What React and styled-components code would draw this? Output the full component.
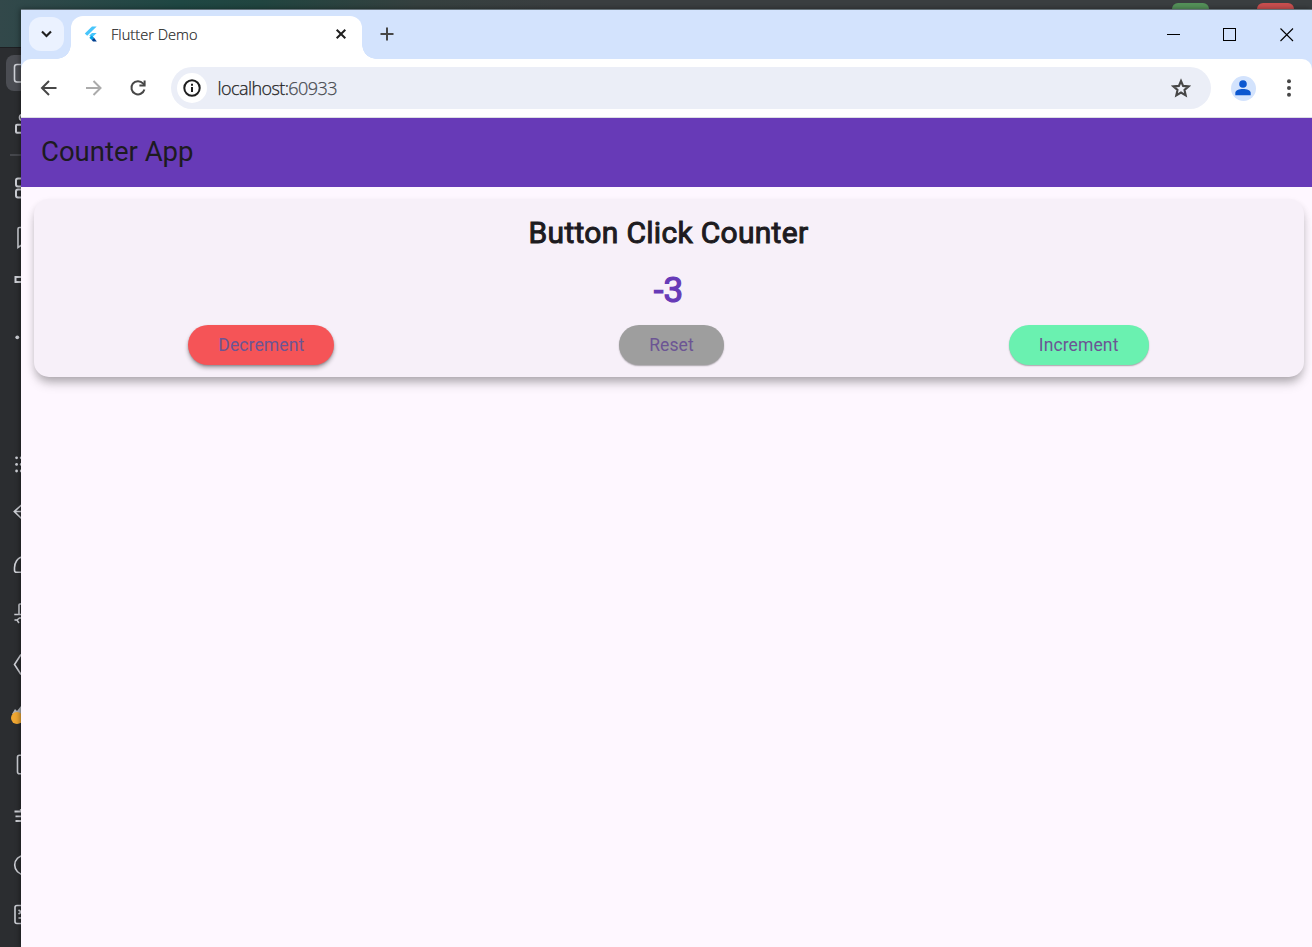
import React from "react";
import styled, { createGlobalStyle } from "styled-components";

const GlobalStyle = createGlobalStyle`
  * { box-sizing: border-box; }
  html, body { margin: 0; padding: 0; overflow: hidden; background: #2b2d30; }
  svg { display: block; flex: none; }
  button { border: 0; padding: 0; background: none; font: inherit; }
`;

const Desktop = styled.div`
  position: relative;
  width: 1312px;
  height: 947px;
  overflow: hidden;
  background: #2b2d30;
`;

const IdeTitleBar = styled.div`
  display: flex;
  justify-content: flex-end;
  gap: 48px;
  height: 48px;
  padding: 3px 18px 0 0;
  background: linear-gradient(90deg, #32484a 0, #1f4743 180px, #214540 260px, #35403f 420px, #3a3e40 560px, #3a3e40 100%);
  border-bottom: 1px solid #1e1f22;
`;

const RunChip = styled.span`
  width: 37px;
  height: 30px;
  border-radius: 6px;
  background: ${(p) => p.$color};
`;

const IdeSidebar = styled.div`
  display: flex;
  flex-direction: column;
  width: 40px;
  padding-top: 7px;
`;

const ToolSlot = styled.div`
  height: 36px;
  margin-top: ${(p) => p.$gap || 0}px;
  border-radius: 8px;
  ${(p) => p.$active && "margin-left: 6px; background: #4b4d53; & > svg { margin-left: -6px; }"}
`;

const SidebarRule = styled.div`
  height: 2px;
  margin: 12px 0 0 10px;
  background: #45474c;
`;

const BrowserWindow = styled.div`
  position: absolute;
  left: 21px;
  top: 9px;
  width: 1291px;
  height: 938px;
  display: flex;
  flex-direction: column;
  border-top: 1px solid #68757d;
  background: #d3e3fd;
  box-shadow: -1px 0 5px rgba(0, 0, 0, 0.4);
`;

const TabStrip = styled.div`
  display: flex;
  align-items: flex-start;
  height: 49px;
  padding: 6px 0 0 8px;
`;

const TabSearch = styled.button`
  display: flex;
  align-items: center;
  justify-content: center;
  width: 35px;
  height: 34px;
  margin: 1px 7px 0 0;
  border-radius: 12px;
  background: #ebf2ff;
`;

const Tab = styled.div`
  position: relative;
  display: flex;
  align-items: center;
  width: 290.5px;
  height: 43px;
  padding: 0 12.5px 7px 12px;
  border-radius: 12px 12px 0 0;
  background: #fff;
  &::before, &::after {
    content: "";
    position: absolute;
    bottom: 0;
    width: 14px;
    height: 14px;
  }
  &::before { left: -14px; background: radial-gradient(circle at 0 0, transparent 13.5px, #fff 14px); }
  &::after { right: -14px; background: radial-gradient(circle at 100% 0, transparent 13.5px, #fff 14px); }
`;

const TabTitle = styled.span`
  flex: 1;
  margin-left: 12px;
  font: 300 14.6px/20px "Open Sans", "Noto Sans", sans-serif;
  letter-spacing: 0.03px;
  color: #1f1f1f;
  -webkit-text-stroke: 0.2px #1f1f1f;
  white-space: nowrap;
`;

const NewTab = styled.button`
  display: flex;
  margin: 10px 0 0 17px;
`;

const WindowControls = styled.div`
  display: flex;
  gap: 41px;
  margin: 11px 19px 0 auto;
  & > :last-child { margin-left: 1px; margin-right: -1px; }
`;

const Toolbar = styled.div`
  display: flex;
  align-items: center;
  height: 59px;
  padding: 0 20.5px 0 18px;
  border-radius: 10px 10px 0 0;
  border-bottom: 1px solid #dcdde3;
  background: #fff;
`;

const NavButtons = styled.div`
  display: flex;
  gap: 24.5px;
  width: 132px;
`;

const AddressBar = styled.div`
  display: flex;
  align-items: center;
  width: 1040px;
  height: 42px;
  padding: 0 20px 0 6px;
  border-radius: 21px;
  background: #ebeef7;
`;

const SiteInfo = styled.span`
  display: flex;
  align-items: center;
  justify-content: center;
  width: 30px;
  height: 30px;
  border-radius: 50%;
  background: #fff;
`;

const Url = styled.span`
  flex: 1;
  margin-left: 10.5px;
  font: 300 18px/24px "Open Sans", "Noto Sans", sans-serif;
  letter-spacing: -0.58px;
  color: #1f1f1f;
  -webkit-text-stroke: 0.25px currentColor;
`;

const Port = styled.span`
  color: #474a50;
`;

const Profile = styled.span`
  display: flex;
  align-items: center;
  justify-content: center;
  width: 25px;
  height: 25px;
  margin: 0 29.5px 0 20px;
  padding: 0 1px 1px 0;
  border-radius: 50%;
  background: #d3e3fd;
`;

const AppBar = styled.header`
  display: flex;
  align-items: center;
  height: 69px;
  padding: 0 20px 2px;
  background: #673ab7;
  font: 400 27.5px/36px Roboto, sans-serif;
  color: #1d1b20;
`;

const Page = styled.main`
  flex: 1;
  padding: 11.5px 8.5px 0 12.5px;
  background: #fef7ff;
`;

const Card = styled.section`
  display: flex;
  flex-direction: column;
  align-items: center;
  height: 178.5px;
  padding: 15.5px 12.5px 0;
  border-radius: 15px;
  background: #f7f0f9;
  box-shadow: 0 8px 12px -3px rgba(0, 0, 0, 0.25), 0 4px 9px -1px rgba(0, 0, 0, 0.14);
`;

const Heading = styled.h1`
  margin: 0;
  font: 400 30px/38px Roboto, sans-serif;
  letter-spacing: 0.3px;
  -webkit-text-stroke: 1px currentColor;
  color: #1d1b20;
`;

const Count = styled.div`
  margin-top: 17px;
  font: 400 35px/44px Roboto, sans-serif;
  -webkit-text-stroke: 1.2px currentColor;
  color: #673ab7;
`;

const Actions = styled.div`
  display: flex;
  justify-content: space-around;
  width: 100%;
  margin-top: 11.5px;
`;

const ActionButton = styled.button`
  width: ${(p) => p.$width}px;
  height: 40px;
  padding-top: 2px;
  border-radius: 20px;
  background: ${(p) => p.$color};
  box-shadow: ${(p) => (p.$raised ? "0 3px 4px rgba(0,0,0,.3), 0 1px 2px rgba(0,0,0,.2)" : "0 1px 1.5px rgba(0,0,0,.32)")};
  font: 400 17.5px/25px Roboto, sans-serif;
  letter-spacing: 0.12px;
  color: #6c5594;
`;

const ToolIcon = ({ children }) => (
  <svg width="40" height="36" fill="none" stroke="#ced0d6" strokeWidth="1.6">{children}</svg>
);

const ChevronDown = () => (
  <svg width="12" height="8" fill="none" stroke="#1f1f1f" strokeWidth="2.1"><path d="M1 1.4 5.500 6 10 1.400" /></svg>
);

const FlutterLogo = () => (
  <svg width="16" height="16" viewBox="0 0 16 16">
    <path d="M9 .5h4.700L4.200 9.800 1.800 7.500z" fill="#47c5fb" />
    <path d="M9 7h4.700l-5 4.700L6.300 9.400z" fill="#47c5fb" />
    <path d="m6.300 11.700 2.400-2.300 2.400 2.300-2.400 2.400z" fill="#00a2e8" />
    <path d="m8.700 14.100 2.400-2.400 2.700 3.700H10z" fill="#003f8f" />
  </svg>
);

const ArrowIcon = ({ color, flip }) => (
  <svg width="20" height="20" fill="none" stroke={color} strokeWidth="2">
    <path d={flip ? "M2 10h14M9.500 3l7 7-7 7" : "M17.500 10h-14M10 3l-7 7 7 7"} />
  </svg>
);

const ReloadIcon = () => (
  <svg width="20" height="20" viewBox="0 0 20 20" fill="none" stroke="#474747" strokeWidth="2">
    <path d="M16.400 11.500A6.600 6.600 0 1 1 15 5.400l1.500 1.800" />
    <path d="M16.600 2.500V7.600h-5.200" />
  </svg>
);

const InfoIcon = () => (
  <svg width="18" height="18" fill="none" stroke="#1f1f1f" strokeWidth="2">
    <circle cx="9" cy="9" r="7.700" /><path d="M9 8v5M9 4.800v2" />
  </svg>
);

const StarIcon = () => (
  <svg width="20" height="20" viewBox="0 0 20 20" fill="none" stroke="#474747" strokeWidth="2.100">
    <path d="m10 3 2.100 4.900 5.500.5-4.100 3.600 1.200 5.400-4.700-2.900-4.700 2.900 1.200-5.400-4.100-3.600 5.500-.5z" />
  </svg>
);

const PersonIcon = () => (
  <svg width="16" height="16" fill="#0b57d0">
    <circle cx="8" cy="4" r="3.800" /><path d="M.3 15.200v-2.200C.3 10.400 4 9 8 9s7.700 1.400 7.700 4v2.200z" />
  </svg>
);

const MenuIcon = () => (
  <svg width="6" height="20" fill="#474747"><circle cx="3" cy="3.200" r="2" /><circle cx="3" cy="10" r="2" /><circle cx="3" cy="16.800" r="2" /></svg>
);

const GripDots = () => (
  <g fill="#ced0d6" stroke="none">
    {[10.8, 17.4, 24].map((y) => (
      <React.Fragment key={y}><circle cx="16.600" cy={y} r="1.400" /><circle cx="21.200" cy={y} r="1.400" /></React.Fragment>
    ))}
  </g>
);

const tools = [
  { gap: 0, active: true, icon: <rect x="14.500" y="9.500" width="18" height="17.500" rx="2.500" /> },
  { gap: 15, icon: <><circle cx="22.500" cy="11.500" r="3" /><rect x="16" y="18.800" width="8" height="8" rx="1" strokeWidth="2" /></> },
  { rule: true },
  { gap: 14, icon: <><rect x="16" y="8.500" width="8" height="8" rx="2" strokeWidth="2" /><rect x="16" y="19.500" width="8" height="8" rx="2" strokeWidth="2" /></> },
  { gap: 14, icon: <path d="M30 7.500H19.500q-1.500 0-1.500 1.500v18.500l6-4" /> },
  { gap: 6, icon: <path d="M22 15h-6.500v5H22" strokeWidth="2" /> },
  { gap: 22, icon: <circle cx="17.300" cy="17.300" r="1.900" fill="#ced0d6" stroke="none" /> },
  { gap: 91, icon: <GripDots /> },
  { gap: 11, icon: <path d="M22 10.500 14.300 17.500 22 25M14.300 17.500h8" /> },
  { gap: 17, icon: <path d="M24 9.800c-7 0-9.500 7-9.500 11v2.500q0 2 2 2h8" /> },
  { gap: 13, icon: <path d="M22 8h-2q-1 0-1 1v9.500M14.300 18.500h8M14.500 24h2.500l2 3M22 22h-2.500l-2.500 2" /> },
  { gap: 14, icon: <path d="M21 8.500 14.500 18.500 21 28.500" /> },
  { gap: 15, icon: <><path d="m12 17 3-5 2 2 4-5v10z" fill="#aeb0b5" stroke="none" /><circle cx="17" cy="21" r="6" fill="#f0a732" stroke="none" /></> },
  { gap: 14, icon: <rect x="17.500" y="8.200" width="14" height="18.500" rx="2" /> },
  { gap: 14, icon: <path d="M14.500 14.500h8M15.500 19.300h7M15.500 24h7M20.800 12v3" strokeWidth="1.800" /> },
  { gap: 13, icon: <circle cx="24.200" cy="19" r="9.500" /> },
  { gap: 14, icon: <><rect x="15" y="9.500" width="18" height="18" rx="2" /><path d="m18.500 14 3 2-3 2M18.500 22h4" /></> },
];

export default function App() {
  return (
    <Desktop>
      <GlobalStyle />
      <IdeTitleBar>
        <RunChip $color="#549159" />
        <RunChip $color="#c94f4f" />
      </IdeTitleBar>
      <IdeSidebar>
        {tools.map((t, i) =>
          t.rule ? <SidebarRule key={i} /> : (
            <ToolSlot key={i} $gap={t.gap} $active={t.active}><ToolIcon>{t.icon}</ToolIcon></ToolSlot>
          )
        )}
      </IdeSidebar>

      <BrowserWindow>
        <TabStrip>
          <TabSearch aria-label="Search tabs"><ChevronDown /></TabSearch>
          <Tab>
            <FlutterLogo />
            <TabTitle>Flutter Demo</TabTitle>
            <svg width="16" height="16" stroke="#1f1f1f" strokeWidth="2"><path d="m3.700 3.700 8.600 8.600m0-8.600-8.600 8.600" /></svg>
          </Tab>
          <NewTab aria-label="New tab">
            <svg width="16" height="16" stroke="#474747" strokeWidth="2"><path d="M8 1.500v13M1.500 8h13" /></svg>
          </NewTab>
          <WindowControls>
            <svg width="15" height="15" stroke="#000"><path d="M1 7.500h13" /></svg>
            <svg width="15" height="15" stroke="#000" fill="none"><rect x="1.500" y="1.500" width="12" height="12" /></svg>
            <svg width="15" height="15" stroke="#000" strokeWidth="1.100"><path d="m1.500 1.500 12.500 12.500m0-12.500L1.500 14" /></svg>
          </WindowControls>
        </TabStrip>

        <Toolbar>
          <NavButtons>
            <ArrowIcon color="#474747" />
            <ArrowIcon color="#ababab" flip />
            <ReloadIcon />
          </NavButtons>
          <AddressBar>
            <SiteInfo><InfoIcon /></SiteInfo>
            <Url>localhost:<Port>60933</Port></Url>
            <StarIcon />
          </AddressBar>
          <Profile><PersonIcon /></Profile>
          <MenuIcon />
        </Toolbar>

        <AppBar>Counter App</AppBar>
        <Page>
          <Card>
            <Heading>Button Click Counter</Heading>
            <Count>-3</Count>
            <Actions>
              <ActionButton $width={146} $color="#f55457" $raised>Decrement</ActionButton>
              <ActionButton $width={105} $color="#9e9e9e">Reset</ActionButton>
              <ActionButton $width={140} $color="#6af1b0">Increment</ActionButton>
            </Actions>
          </Card>
        </Page>
      </BrowserWindow>
    </Desktop>
  );
}
